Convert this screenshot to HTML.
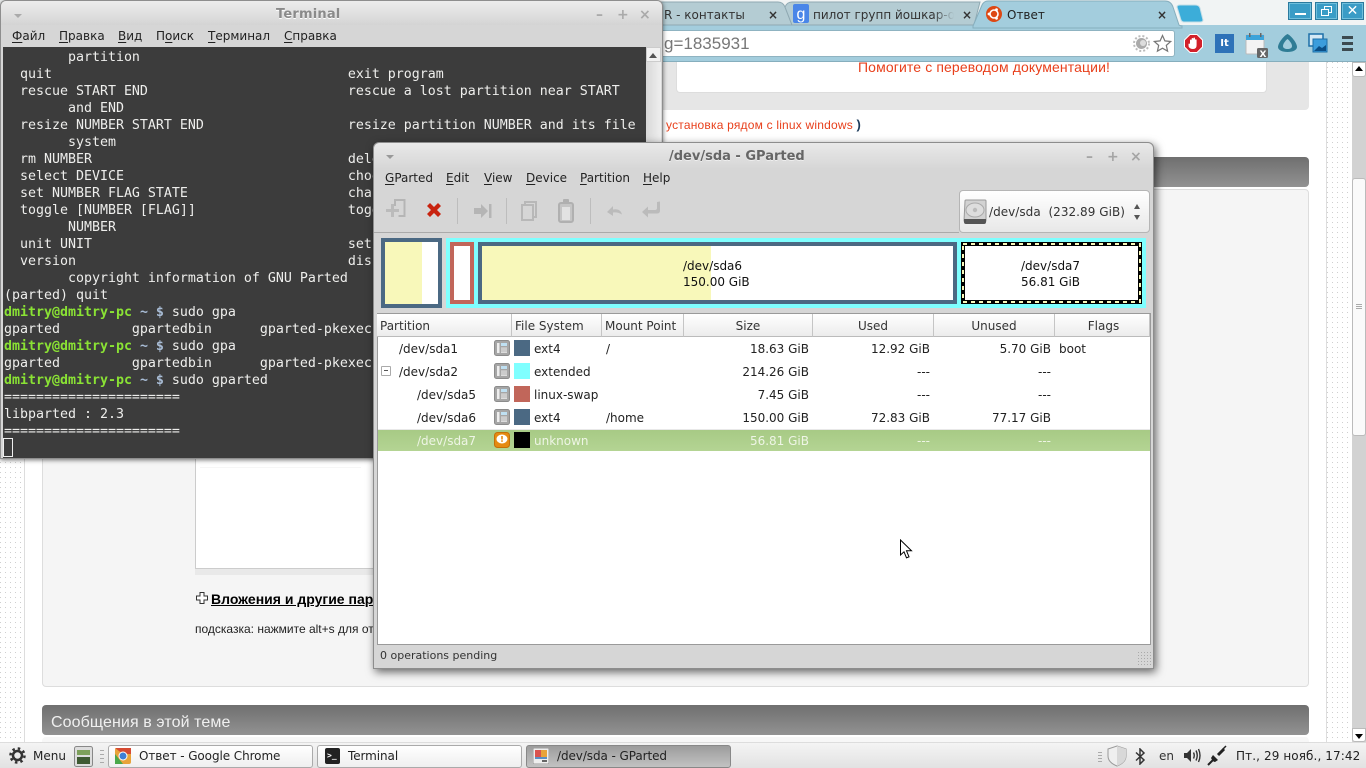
<!DOCTYPE html>
<html><head><meta charset="utf-8"><title>Desktop</title>
<style>
*{box-sizing:border-box}
html,body{margin:0;padding:0;width:1366px;height:768px;overflow:hidden;background:#fff;font-family:"DejaVu Sans",sans-serif;font-size:12px;color:#222}
.a{position:absolute}
.t{position:absolute;white-space:nowrap;line-height:16px}
.dots{background-color:#cfcfcf;background-image:linear-gradient(to right,transparent 1px,#fff 1px),linear-gradient(to bottom,transparent 1px,#fff 1px);background-size:5px 5px}
.lib{font-family:"Liberation Sans",sans-serif}
u{text-underline-offset:2px}
#term{left:0;top:0;width:663px;height:459px;background:#d6d6d6;border:1px solid #8e8e8e;border-radius:6px 6px 0 0;box-shadow:0 1px 5px rgba(0,0,0,.55);overflow:hidden}
#term pre{position:absolute;left:2px;top:46px;width:643px;height:411px;margin:0;padding:2px 0 0 1px;background:#3c3c3c;color:#eeeeec;font:13.29px/17px "DejaVu Sans Mono",monospace;overflow:hidden}
#term b.g{color:#8ae234;font-weight:bold}
#term b.b{color:#a9bdd6;font-weight:bold}
#gp{left:373px;top:142px;width:781px;height:527px;background:#d6d6d6;border:1px solid #8d8d8d;border-radius:6px 6px 0 0;box-shadow:2px 3px 9px rgba(0,0,0,.6)}
.tbbtn{position:absolute;top:745px;height:23px;width:205px;border:1px solid #aaa;border-radius:3px;background:linear-gradient(#fff,#efefef);}
.tbbtn span{position:absolute;left:30px;top:1px;line-height:18px;white-space:nowrap;color:#222;letter-spacing:-.08px}
.hdr{position:absolute;top:314px;height:23px;background:linear-gradient(#fff,#ececec);border-right:1px solid #c5c5c5;border-bottom:1px solid #bbb;line-height:24px;padding-left:3px;color:#333}
.row{position:absolute;left:378px;width:772px;height:23px}
.c{position:absolute;white-space:nowrap;line-height:16px;top:3px;color:#222}
.r{text-align:right}
.sw{position:absolute;left:136px;top:2px;width:16px;height:16px}
.ico{position:absolute;left:116px;top:2px;width:16px;height:16px}
.wb{position:absolute;top:2px;height:18px;background:#3a9cc6;border:1px solid #2b7a9e;box-shadow:inset 0 0 0 1px #6fbfdc}
</style></head>
<body>
<!-- browser page -->
<div class="a" style="left:0;top:0;width:1366px;height:30px;background:#f1f4f4"></div>
<div class="a" style="left:663px;top:25px;width:703px;height:37px;background:#a3cddd;border-bottom:1px solid #86aebd"></div>
<svg class="a" style="left:660px;top:0" width="560" height="30" viewBox="0 0 560 30">
<path d="M0 25V2H118q5 0 7 5l7 18z" fill="#b4ccd3" stroke="#8fa9b2"/>
<path d="M125 7q2-5 7-5H320l-6 23H132z" fill="#b4ccd3" stroke="#8fa9b2"/>
<path d="M313 26l9-21q2-4 6-4H505q6 0 8 6l6 18q1 1 3 1v2H313z" fill="#a3cddd" stroke="#86aebd"/>
<path d="M517 7q0-2 3-2h15q4 0 5 3l3 12q0 2-3 2h-16q-2 0-3-2z" fill="#3cadd9" stroke="#c5dfe8"/>
</svg>
<div class="t" style="left:664px;top:7px;color:#333;font-size:12px">R - контакты</div>
<div class="t" style="left:768px;top:7px;color:#333;font-weight:bold;font-size:12px;width:10px">×</div>
<svg class="a" style="left:793px;top:4px" width="16" height="19"><rect width="16" height="19" rx="2" fill="#4a86e8"/><text x="3.500" y="15" font-family="Liberation Sans" font-size="16" fill="#fff">g</text></svg>
<div class="t" style="left:813px;top:7px;color:#333;font-size:12px;width:141px;overflow:hidden;-webkit-mask-image:linear-gradient(to right,#000 120px,transparent 141px)">пилот групп йошкар-о</div>
<div class="t" style="left:962px;top:7px;color:#333;font-weight:bold;font-size:12px">×</div>
<svg class="a" style="left:986px;top:6px" width="16" height="16" viewBox="0 0 16 16"><circle cx="8" cy="8" r="8" fill="#dd4814"/><circle cx="8" cy="8" r="4" fill="none" stroke="#fff" stroke-width="1.600"/><circle cx="3" cy="8" r="1.400" fill="#fff"/><circle cx="10.500" cy="3.700" r="1.400" fill="#fff"/><circle cx="10.500" cy="12.300" r="1.400" fill="#fff"/></svg>
<div class="t" style="left:1007px;top:7px;color:#222;font-size:12px">Ответ</div>
<div class="t" style="left:1157px;top:7px;color:#333;font-weight:bold;font-size:12px">×</div>
<div class="a" style="left:660px;top:30px;width:515px;height:27px;background:#fff;border:1px solid #8fb3c1;border-radius:3px"></div>
<div class="t lib" style="left:664px;top:35px;font-size:17px;color:#777;line-height:18px">g=1835931</div>
<svg class="a" style="left:1133px;top:35px" width="17" height="17" viewBox="0 0 17 17"><circle cx="8.500" cy="8.500" r="5.500" fill="#aaa"/><circle cx="8.500" cy="8.500" r="7.500" fill="none" stroke="#bbb" stroke-width="2" stroke-dasharray="2 2"/><circle cx="10" cy="8" r="3" fill="#ddd"/></svg>
<svg class="a" style="left:1153px;top:34px" width="19" height="19" viewBox="0 0 19 19"><path d="M9.500 1.500l2.400 5.400 5.800.6-4.400 3.900 1.300 5.800-5.100-3-5.100 3 1.300-5.800-4.400-3.900 5.800-.6z" fill="#fff" stroke="#777" stroke-width="1.200"/></svg>
<svg class="a" style="left:1184px;top:34px" width="19" height="19" viewBox="0 0 19 19"><path d="M6 .5h7L18.500 6v7L13 18.500H6L.5 13V6z" fill="#d2202a" stroke="#fff" stroke-width="1"/><path d="M6 11V6.500q0-1 .8-1t.8 1V5q0-1 .9-1t.9 1v-.5q0-1 .8-1t.8 1V6q0-.8.8-.8t.8.8v5q0 4-3.500 4t-4.500-2.500L4.500 10q.5-1 1.500 0z" fill="#fff"/></svg>
<div class="a" style="left:1215px;top:34px;width:19px;height:19px;background:#2e72b8;color:#fff;font:bold 10px/19px 'DejaVu Sans',sans-serif;text-align:center">It</div>
<svg class="a" style="left:1245px;top:33px" width="24" height="26" viewBox="0 0 24 26"><rect x="1" y="2" width="18" height="19" rx="1" fill="#f3f3f3" stroke="#bbb"/><rect x="1" y="2" width="18" height="5" fill="#3ba3d9"/><rect x="4" y="0" width="1.500" height="4" fill="#666"/><rect x="15" y="0" width="1.500" height="4" fill="#666"/><rect x="12" y="15" width="11" height="10" rx="1.500" fill="#666"/><text x="14.500" y="24" font-size="9" font-weight="bold" fill="#fff" font-family="DejaVu Sans">X</text></svg>
<svg class="a" style="left:1277px;top:33px" width="21" height="20" viewBox="0 0 21 20"><path d="M10.500 1C7 2.500 1 10 1 14c0 3 4 5 9.500 5S20 17 20 14C20 10 14 2.500 10.500 1z" fill="#2f7c95"/><path d="M10.500 6C8 8 6 11 6 13c0 2 2 3 4.500 3S15 15 15 13c0-2-2-5-4.500-7z" fill="#a3cddd"/></svg>
<svg class="a" style="left:1308px;top:33px" width="20" height="20" viewBox="0 0 20 20"><rect x="1" y="1" width="14" height="12" fill="#d5e9f5" stroke="#1d6fa8" stroke-width="1.500"/><rect x="5" y="6" width="14" height="13" fill="#3c9ddc" stroke="#1d6fa8"/><path d="M6 18l5-5 3 2 4-3v6z" fill="#0c4f86"/></svg>
<div class="a" style="left:1342px;top:36px;width:11px;height:3px;background:#3c4a50;box-shadow:0 6px 0 #3c4a50,0 12px 0 #3c4a50"></div>
<div class="wb" style="left:1288px;width:24px"><div class="a" style="left:6px;top:10px;width:11px;height:2px;background:#fff"></div></div>
<div class="wb" style="left:1315px;width:23px"><div class="a" style="left:8px;top:3px;width:8px;height:7px;border:1px solid #fff"></div><div class="a" style="left:5px;top:6px;width:8px;height:7px;border:1px solid #fff;background:#3a9cc6"></div></div>
<div class="wb" style="left:1341px;width:23px;color:#fff;font:14px/16px 'DejaVu Sans',sans-serif;text-align:center">✕</div>

<!-- page side bars -->
<div class="a dots" style="left:0;top:62px;width:25px;height:680px;border-right:1px solid #ddd"></div>
<div class="a dots" style="left:1326px;top:62px;width:26px;height:680px;border-left:1px solid #ddd"></div>
<div class="a" style="left:1352px;top:62px;width:14px;height:680px;background:#d2d2d2"></div>
<div class="a" style="left:1352px;top:178px;width:14px;height:258px;background:#fafafa;border:1px solid #bbb;border-radius:3px"></div>
<div class="a" style="left:1352px;top:62px;width:14px;height:15px;background:#fff;border:1px solid #bbb;border-radius:0 0 3px 3px"></div>
<div class="a" style="left:1355px;top:66px;border:4px solid transparent;border-bottom:5px solid #000;border-top:0"></div>
<div class="a" style="left:1352px;top:728px;width:14px;height:14px;background:#fff;border:1px solid #bbb;border-radius:0 0 3px 3px"></div>
<div class="a" style="left:1355px;top:734px;border:4px solid transparent;border-top:5px solid #000;border-bottom:0"></div>
<div class="a" style="left:1356px;top:304px;width:6px;height:1px;background:#aaa;box-shadow:0 2px 0 #aaa,0 4px 0 #aaa"></div>

<!-- page content -->
<div class="a" style="left:30px;top:62px;width:1279px;height:48px;background:#e6e6e6;border-radius:0 0 4px 4px"></div>
<div class="a" style="left:676px;top:62px;width:591px;height:31px;background:#fff;border:1px solid #ddd;border-top:0;border-radius:0 0 4px 4px"></div>
<div class="t lib" style="left:858px;top:59px;font-size:14px;color:#e8401c;letter-spacing:.12px">Помогите с переводом документации!</div>
<div class="t lib" style="left:666px;top:117px;font-size:12px;color:#e8401c;letter-spacing:.2px">установка рядом с linux windows <b style="color:#1c3a5a;font-size:13px">)</b></div>
<div class="a" style="left:42px;top:157px;width:1267px;height:30px;background:linear-gradient(#6f6f6f,#929292);border-radius:4px"></div>
<div class="a" style="left:42px;top:189px;width:1267px;height:498px;background:#f5f5f5;border:1px solid #ddd;border-radius:4px"></div>
<div class="a" style="left:195px;top:440px;width:930px;height:129px;background:#fff;border:1px solid #ccc;border-top:0"></div>
<div class="a" style="left:200px;top:467px;width:161px;height:1px;background:#f6f6f6"></div>
<div class="a" style="left:195px;top:569px;width:930px;height:6px;background:#e9e9e9"></div>
<svg class="a" style="left:196px;top:592px" width="12" height="12" viewBox="0 0 12 12"><path d="M4 .5h4v3.500h3.500v4H8v3.500H4V8H.5V4H4z" fill="#fff" stroke="#333"/></svg>
<div class="t lib" style="left:211px;top:591px;font-size:14px;font-weight:bold;color:#000;text-decoration:underline">Вложения и другие пар</div>
<div class="t lib" style="left:195px;top:621px;font-size:12px;color:#222">подсказка: нажмите alt+s для от</div>
<div class="a" style="left:42px;top:705px;width:1267px;height:30px;background:linear-gradient(#6f6f6f,#929292);border-radius:4px"></div>
<div class="t lib" style="left:51px;top:715px;font-size:16px;color:#f0f0f0;letter-spacing:.1px">Сообщения в этой теме</div>
<div class="a" style="left:42px;top:737px;width:1267px;height:6px;background:#f7f7f7;border-radius:4px 4px 0 0"></div>

<!-- terminal -->
<div class="a" id="term">
<div class="a" style="left:0;top:0;width:661px;height:24px;background:linear-gradient(#ededed,#d4d4d4)"></div>
<div class="t" style="left:275px;top:6px;font-weight:bold;font-size:13px;color:#8a8a8a;text-shadow:0 1px 0 #fff;letter-spacing:.2px">Terminal</div>
<div class="a" style="left:13px;top:13px;border:4px solid transparent;border-top:4px solid #aaa;border-bottom:0"></div>
<div class="t" style="left:595px;top:6px;color:#aaa;font-weight:bold;font-size:14px">–</div>
<div class="t" style="left:616px;top:6px;color:#aaa;font-weight:bold;font-size:14px">+</div>
<div class="t" style="left:638px;top:6px;color:#aaa;font-weight:bold;font-size:14px">×</div>
<div class="t" style="left:11px;top:27px;color:#222"><u>Ф</u>айл</div>
<div class="t" style="left:58px;top:27px;color:#222"><u>П</u>равка</div>
<div class="t" style="left:117px;top:27px;color:#222"><u>В</u>ид</div>
<div class="t" style="left:155px;top:27px;color:#222">П<u>о</u>иск</div>
<div class="t" style="left:207px;top:27px;color:#222"><u>Т</u>ерминал</div>
<div class="t" style="left:283px;top:27px;color:#222"><u>С</u>правка</div>
<pre>        partition
  quit                                     exit program
  rescue START END                         rescue a lost partition near START
        and END
  resize NUMBER START END                  resize partition NUMBER and its file
        system
  rm NUMBER                                delete partition NUMBER
  select DEVICE                            choose the device to edit
  set NUMBER FLAG STATE                    change the FLAG on partition
  toggle [NUMBER [FLAG]]                   toggle the state of FLAG
        NUMBER
  unit UNIT                                set the default unit to UNIT
  version                                  display the version number
        copyright information of GNU Parted
(parted) quit
<b class="g">dmitry@dmitry-pc</b> <b class="b">~ $</b> sudo gpa
gparted         gpartedbin      gparted-pkexec
<b class="g">dmitry@dmitry-pc</b> <b class="b">~ $</b> sudo gpa
gparted         gpartedbin      gparted-pkexec
<b class="g">dmitry@dmitry-pc</b> <b class="b">~ $</b> sudo gparted
======================
libparted : 2.3
======================
</pre>
<div class="a" style="left:2px;top:437px;width:10px;height:19px;background:#3c3c3c;border:1px solid #eee"></div>
<div class="a" style="left:645px;top:46px;width:15px;height:411px;background:linear-gradient(to right,#d8d8d8,#efefef)"></div>
<div class="a" style="left:645px;top:46px;width:15px;height:15px;background:#f2f2f2;border:1px solid #ccc"></div>
<div class="a" style="left:648px;top:52px;border:4px solid transparent;border-bottom:5px solid #555;border-top:0"></div>
</div>

<!-- gparted -->
<div class="a" id="gp"><div class="a" style="left:1px;top:0;width:779px;height:525px">
<div class="a" style="left:-1px;top:0;width:779px;height:26px;background:linear-gradient(#e9e9e9,#d6d6d6);border-radius:6px 6px 0 0"></div>
<div class="t" style="left:294px;top:6px;font-weight:bold;font-size:13px;color:#666;text-shadow:0 1px 0 #eee">/dev/sda - GParted</div>
<div class="a" style="left:11px;top:12px;border:4px solid transparent;border-top:4px solid #999;border-bottom:0"></div>
<div class="t" style="left:711px;top:6px;color:#a5a5a5;font-weight:bold;font-size:14px">–</div>
<div class="t" style="left:732px;top:6px;color:#a5a5a5;font-weight:bold;font-size:14px">+</div>
<div class="t" style="left:755px;top:6px;color:#a5a5a5;font-weight:bold;font-size:14px">×</div>
<div class="t" style="left:10px;top:27px;color:#222"><u>G</u>Parted</div>
<div class="t" style="left:71px;top:27px;color:#222"><u>E</u>dit</div>
<div class="t" style="left:109px;top:27px;color:#222"><u>V</u>iew</div>
<div class="t" style="left:151px;top:27px;color:#222"><u>D</u>evice</div>
<div class="t" style="left:205px;top:27px;color:#222"><u>P</u>artition</div>
<div class="t" style="left:268px;top:27px;color:#222"><u>H</u>elp</div>
<svg class="a" style="left:0;top:47px" width="310" height="44" viewBox="0 0 310 44">
<g transform="translate(1 0)"><path d="M19 16v-6h9.500v16h-6" fill="none" stroke="#b5b5b5" stroke-width="2"/><path d="M15 14v5h-5v3h5v5h3v-5h5v-3h-5v-5z" fill="#bbb"/></g>
<path d="M52 16l3-3 4 4 4-4 3 3-4 4 4 4-3 3-4-4-4 4-3-3 4-4z" fill="#c8230f"/>
<path d="M99 18v6h7v4l7-7-7-7v4z" fill="#b5b5b5"/><rect x="114" y="14" width="2.500" height="14" fill="#b5b5b5"/>
<rect x="82" y="8" width="1" height="26" fill="#bdbdbd"/><rect x="131" y="8" width="1" height="26" fill="#bdbdbd"/><rect x="215" y="8" width="1" height="26" fill="#bdbdbd"/>
<rect x="150" y="12" width="11" height="15" fill="none" stroke="#b8b8b8" stroke-width="2"/><rect x="147" y="15" width="11" height="15" fill="#d6d6d6" stroke="#b8b8b8" stroke-width="2"/>
<rect x="184" y="13" width="14" height="19" rx="2" fill="#c5c5c5" stroke="#b0b0b0" stroke-width="2"/><rect x="187" y="17" width="8" height="13" fill="#e2e2e2"/><rect x="188" y="9" width="6" height="5" rx="1" fill="#b0b0b0"/>
<path d="M232 22l6-6v3.500c5-1 8 1 9 5-3-2-6-2.500-9-2v3.500z" fill="#bbb"/>
<path d="M283 14v6q0 2-2 2h-7v-3.500l-6 5.500 6 5.500v-4h9q3 0 3-3v-9z" transform="translate(-1 -2)" fill="#bbb"/>
</svg>
<div class="a" style="left:-1px;top:89px;width:585px;height:1px;background:#aaa"></div>
<div class="a" style="left:584px;top:47px;width:191px;height:43px;background:linear-gradient(#fff,#e8e8e8);border:1px solid #b5b5b5;border-radius:4px"></div>
<svg class="a" style="left:588px;top:56px" width="24" height="26" viewBox="0 0 24 26"><path d="M2 2q0-1 1-1h19q1 0 1 1v20H1z" fill="#d2d2d2" stroke="#999"/><ellipse cx="12" cy="11" rx="9" ry="7" fill="#ddd" stroke="#aaa"/><circle cx="12" cy="11" r="2.200" fill="#bbb"/><path d="M1 20h22v3q0 2-2 2H3q-2 0-2-2z" fill="#555"/></svg>
<div class="t" style="left:614px;top:61px;color:#333;letter-spacing:.04px">/dev/sda&nbsp; (232.89 GiB)</div>
<div class="a" style="left:759px;top:61px;border:3.500px solid transparent;border-bottom:5px solid #555;border-top:0"></div>
<div class="a" style="left:759px;top:72px;border:3.500px solid transparent;border-top:5px solid #555;border-bottom:0"></div>

<!-- list frame -->
<div class="a" style="left:2px;top:170px;width:774px;height:332px;background:#fff;border:1px solid #9a9a9a"></div>
<div class="t" style="left:5px;top:505px;font-size:11px;color:#333">0 operations pending</div>
<div class="a" style="left:763px;top:509px;width:13px;height:13px;background-color:#aaa;background-image:linear-gradient(to right,transparent 1px,#d6d6d6 1px),linear-gradient(to bottom,transparent 1px,#d6d6d6 1px);background-size:3px 3px"></div>
</div></div>

<!-- partition map -->
<div class="a" style="left:381px;top:238px;width:61px;height:70px;background:linear-gradient(to right,#f8f8ba 37px,#fff 37px);border:4px solid #4b6983;background-origin:padding-box;background-clip:padding-box;"></div>
<div class="a" style="left:446px;top:238px;width:700px;height:70px;background:#7fffff"></div>
<div class="a" style="left:450px;top:242px;width:24px;height:62px;background:#fff;border:4px solid #c1665a"></div>
<div class="a" style="left:478px;top:242px;width:479px;height:62px;background:linear-gradient(to right,#f8f8ba 229px,#fff 229px);border:4px solid #4b6983;background-origin:padding-box;background-clip:padding-box"></div>
<div class="t" style="left:683px;top:258px;color:#111">/dev/sda6</div>
<div class="t" style="left:683px;top:274px;color:#111">150.00 GiB</div>
<svg class="a" style="left:961px;top:242px" width="181" height="62" viewBox="0 0 181 62"><rect width="181" height="62" fill="#fff"/><rect x="2" y="2" width="177" height="58" fill="none" stroke="#000" stroke-width="4"/><rect x="2" y="2" width="177" height="58" fill="none" stroke="#f8f8ba" stroke-width="2" stroke-dasharray="4 4"/></svg>
<div class="t" style="left:1021px;top:258px;color:#111">/dev/sda7</div>
<div class="t" style="left:1021px;top:274px;color:#111">56.81 GiB</div>

<!-- headers -->
<div class="hdr" style="left:377px;width:135px">Partition</div>
<div class="hdr" style="left:512px;width:90px">File System</div>
<div class="hdr" style="left:602px;width:82px">Mount Point</div>
<div class="hdr" style="left:684px;width:129px;text-align:center;padding:0">Size</div>
<div class="hdr" style="left:813px;width:121px;text-align:center;padding:0">Used</div>
<div class="hdr" style="left:934px;width:121px;text-align:center;padding:0">Unused</div>
<div class="hdr" style="left:1055px;width:95px;text-align:center">Flags</div>

<svg width="0" height="0" style="position:absolute"><defs>
<g id="pi"><rect x=".5" y=".5" width="15" height="15" rx="2" fill="#a6a6a6" stroke="#8c8c8c"/><rect x="3" y="3" width="2.500" height="10" fill="#eee"/><rect x="7" y="3" width="6" height="3" fill="#bfe0f2"/><rect x="7" y="7.500" width="6" height="5.500" fill="#ddd"/><path d="M7 9h6M7 11h6" stroke="#999" stroke-width=".6"/></g>
</defs></svg>

<div class="row" style="top:338px"><div class="c" style="left:21px">/dev/sda1</div><svg class="ico"><use href="#pi"/></svg><div class="sw" style="background:#4b6983"></div><div class="c" style="left:156px">ext4</div><div class="c" style="left:228px">/</div><div class="c r" style="right:341px">18.63 GiB</div><div class="c r" style="right:220px">12.92 GiB</div><div class="c r" style="right:99px">5.70 GiB</div><div class="c" style="left:681px">boot</div></div>
<div class="row" style="top:361px"><div class="a" style="left:3px;top:5px;width:10px;height:10px;border:1px solid #aaa;background:#fff;border-radius:1px"><div class="a" style="left:2px;top:3px;width:4px;height:1px;background:#555"></div></div><div class="c" style="left:21px">/dev/sda2</div><svg class="ico"><use href="#pi"/></svg><div class="sw" style="background:#7fffff"></div><div class="c" style="left:156px">extended</div><div class="c r" style="right:341px">214.26 GiB</div><div class="c r" style="right:220px">---</div><div class="c r" style="right:99px">---</div></div>
<div class="row" style="top:384px"><div class="c" style="left:39px">/dev/sda5</div><svg class="ico"><use href="#pi"/></svg><div class="sw" style="background:#c1665a"></div><div class="c" style="left:156px">linux-swap</div><div class="c r" style="right:341px">7.45 GiB</div><div class="c r" style="right:220px">---</div><div class="c r" style="right:99px">---</div></div>
<div class="row" style="top:407px"><div class="c" style="left:39px">/dev/sda6</div><svg class="ico"><use href="#pi"/></svg><div class="sw" style="background:#4b6983"></div><div class="c" style="left:156px">ext4</div><div class="c" style="left:228px">/home</div><div class="c r" style="right:341px">150.00 GiB</div><div class="c r" style="right:220px">72.83 GiB</div><div class="c r" style="right:99px">77.17 GiB</div></div>
<div class="row" style="top:429px;height:22px;background:linear-gradient(#a7ca85,#b4d493);border-top:1px solid #e8e8e8"><div class="c" style="left:39px;color:#eef5e5">/dev/sda7</div><svg class="ico" viewBox="0 0 16 16"><rect x=".5" y=".5" width="15" height="15" rx="3" fill="#e58a12" stroke="#c46f08"/><ellipse cx="8" cy="7" rx="5.500" ry="4.500" fill="#fff"/><rect x="7.200" y="4" width="1.600" height="3.500" fill="#e58a12"/><rect x="7.200" y="8.300" width="1.600" height="1.500" fill="#e58a12"/></svg><div class="sw" style="background:#000"></div><div class="c" style="left:156px;color:#eef5e5">unknown</div><div class="c r" style="right:341px;color:#eef5e5">56.81 GiB</div><div class="c r" style="right:220px;color:#eef5e5">---</div><div class="c r" style="right:99px;color:#eef5e5">---</div></div>

<!-- cursor -->
<svg class="a" style="left:899px;top:539px" width="15" height="21" viewBox="0 0 15 21"><path d="M1.500 1v15l3.500-3.200 2.500 6 2.500-1-2.500-6h5z" fill="#fff" stroke="#000"/></svg>

<!-- taskbar -->
<div class="a" style="left:0;top:742px;width:1366px;height:26px;background:linear-gradient(#f4f4f4,#e2e2e2);border-top:1px solid #ddd"></div>
<svg class="a" style="left:9px;top:747px" width="17" height="17" viewBox="0 0 17 17"><circle cx="8.500" cy="8.500" r="4.500" fill="none" stroke="#333" stroke-width="2.500"/><circle cx="8.500" cy="8.500" r="7" fill="none" stroke="#333" stroke-width="2.500" stroke-dasharray="2.500 3"/></svg>
<div class="t" style="left:33px;top:748px;color:#222">Menu</div>
<svg class="a" style="left:74px;top:746px" width="19" height="21" viewBox="0 0 19 21"><rect x=".5" y=".5" width="18" height="20" rx="2" fill="#ddd" stroke="#888"/><rect x="3" y="4" width="13" height="5" fill="#7da05b"/><rect x="3" y="11" width="13" height="7" fill="#3f5a33"/></svg>
<div class="a" style="left:100px;top:750px;width:4px;height:1px;background:#aaa;box-shadow:0 4px 0 #aaa,0 8px 0 #aaa,0 12px 0 #aaa"></div>
<div class="tbbtn" style="left:108px"><span>Ответ - Google Chrome</span></div>
<svg class="a" style="left:115px;top:748px" width="16" height="16" viewBox="0 0 16 16"><rect width="16" height="16" rx="2" fill="#e8a33a"/><path d="M0 0h16v6H8z" fill="#d64a32"/><path d="M0 6v10h8z" fill="#4aa84a"/><circle cx="8" cy="8" r="4" fill="#3f7fd6" stroke="#fff"/></svg>
<div class="tbbtn" style="left:317px"><span>Terminal</span></div>
<div class="a" style="left:325px;top:748px;width:15px;height:16px;background:#222;border-radius:2px;color:#fff;font:bold 8px/15px 'DejaVu Sans Mono',monospace;padding-left:2px">&gt;_</div>
<div class="tbbtn" style="left:526px;background:linear-gradient(#9c9c9c,#c2c2c2);border-color:#888"><span>/dev/sda - GParted</span></div>
<svg class="a" style="left:533px;top:748px" width="16" height="16" viewBox="0 0 16 16"><rect width="16" height="16" rx="1" fill="#eee" stroke="#999"/><rect x="2" y="2" width="6" height="7" fill="#d9534f"/><rect x="8" y="2" width="6" height="7" fill="#e8a33a"/><rect x="2" y="9" width="12" height="2" fill="#5a8fc4"/><rect x="9" y="12" width="5" height="2" fill="#666"/></svg>

<div class="a" style="left:1098px;top:752px;width:4px;height:1px;background:#aaa;box-shadow:0 3px 0 #aaa,0 6px 0 #aaa,0 9px 0 #aaa"></div>
<svg class="a" style="left:1106px;top:745px" width="22" height="22" viewBox="0 0 22 22"><path d="M11 1l9 3v7c0 5-4 8-9 10-5-2-9-5-9-10V4z" fill="#efefef" stroke="#999"/><path d="M11 1l9 3v7c0 5-4 8-9 10z" fill="#d8d8d8"/></svg>
<svg class="a" style="left:1135px;top:748px" width="11" height="17" viewBox="0 0 11 17"><path d="M1 4.500l8 7.500-4 4V1l4 4-8 7.500" fill="none" stroke="#333" stroke-width="1.500"/></svg>
<div class="t" style="left:1159px;top:748px;color:#333">en</div>
<svg class="a" style="left:1183px;top:747px" width="18" height="17" viewBox="0 0 18 17"><path d="M1 6h3l4-4v13l-4-4H1z" fill="#333"/><path d="M10.500 5.500q1.500 3 0 6M13 3.500q2.500 5 0 10M15.500 2q3 6.500 0 13" fill="none" stroke="#333" stroke-width="1.400"/></svg>
<svg class="a" style="left:1207px;top:745px" width="21" height="21" viewBox="0 0 21 21"><path d="M1 20l6-6" stroke="#222" stroke-width="2"/><path d="M6 10l5 5-3 2q-2 0-4-4z" fill="#222"/><path d="M11 10l6-6" stroke="#222" stroke-width="3"/><path d="M16 4l3-3" stroke="#222" stroke-width="1.500"/></svg>
<div class="t" style="left:1236px;top:748px;color:#222;letter-spacing:.1px">Пт., 29 нояб., 17:42</div>
</body></html>
